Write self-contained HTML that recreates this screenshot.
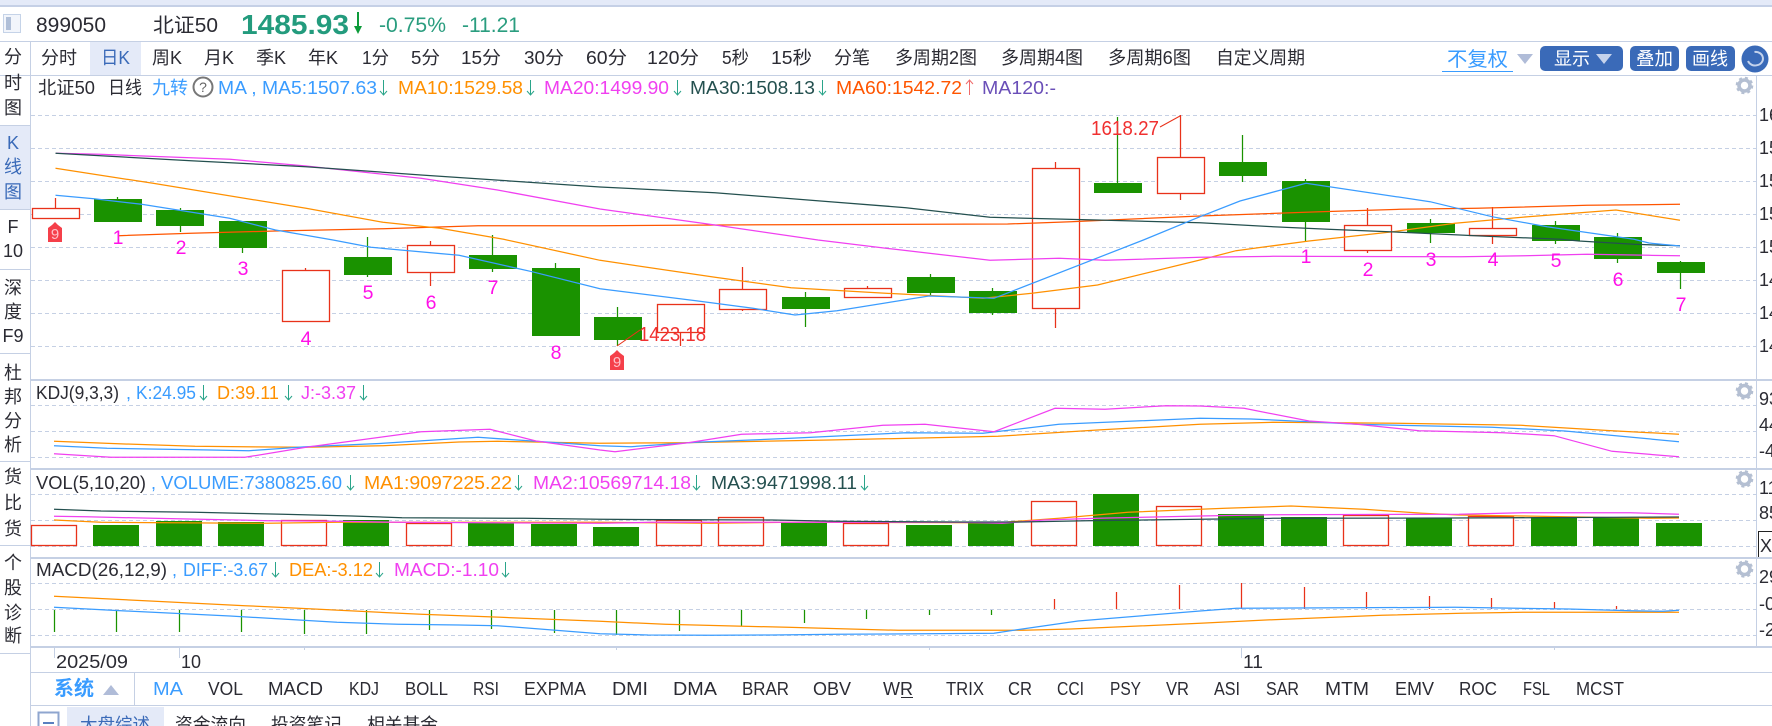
<!DOCTYPE html>
<html><head><meta charset="utf-8"><title>899050</title>
<style>
html,body{margin:0;padding:0;background:#fff;width:1772px;height:726px;overflow:hidden}
svg{display:block}
text{font-family:"Liberation Sans","Noto Sans CJK SC",sans-serif;font-size:18px;fill:#2b2b33}
.b{fill:#3a9cff}.o{fill:#ff9000}.m{fill:#f040f0}.d{fill:#24504f}.r{fill:#ff5500}.p{fill:#6a4fb8}
.n{fill:#ff10e8;font-size:19.5px;text-anchor:middle}
.c{text-anchor:middle}
.l{fill:none;stroke-width:1.25}
.cr{shape-rendering:crispEdges}
</style></head><body>
<svg width="1772" height="726" viewBox="0 0 1772 726" xmlns="http://www.w3.org/2000/svg">
<!-- chrome -->
<rect width="1772" height="5" fill="#e4eaf8"/><rect y="5" width="1772" height="2" fill="#c5d0e6"/>
<rect x="90" y="42" width="51" height="33" fill="#e4eaf8"/>
<rect x="0" y="125" width="30" height="84" fill="#e4eaf8"/>
<rect x="67" y="707" width="97" height="19" fill="#e4eaf8"/>
<g fill="#c5d0e4" class="cr">
<rect y="41" width="1772" height="1"/><rect y="75" width="1772" height="1"/>
<rect x="30" y="41" width="1" height="685"/>
<rect y="125" width="30" height="1"/><rect y="209" width="30" height="1"/><rect y="269" width="30" height="1"/><rect y="353" width="30" height="1"/><rect y="461" width="30" height="1"/><rect y="545" width="30" height="1"/><rect y="653" width="30" height="1"/>
<rect x="30" y="379" width="1742" height="2"/><rect x="30" y="468" width="1742" height="2"/><rect x="30" y="557" width="1742" height="2"/><rect x="30" y="646" width="1742" height="2"/>
<rect x="30" y="672" width="1742" height="1"/><rect x="30" y="705" width="1742" height="1"/>
<rect x="1756" y="75" width="1" height="572"/>
<rect x="134" y="673" width="1" height="32"/>
</g>
<!-- grid -->
<path class="cr" stroke="#c5d0e4" stroke-dasharray="4 3" fill="none" d="M31 115.5H1756M31 148.5H1756M31 181.5H1756M31 214.5H1756M31 247.5H1756M31 280.5H1756M31 313.5H1756M31 346.5H1756M31 405.5H1756M31 431.5H1756M31 457.5H1756M31 494.5H1756M31 520.5H1756M31 546.5H1756M31 583.5H1756M31 609.5H1756M31 635.5H1756"/>
<!-- header -->
<rect x="3.5" y="14.5" width="17" height="18" fill="#f2f5fb" stroke="#c5d3e8"/><rect x="6" y="17" width="5" height="13" fill="#b0bfd8"/>
<text x="36" y="32" textLength="70" lengthAdjust="spacingAndGlyphs" style="font-size:21px">899050</text>
<text x="153" y="32" textLength="65" lengthAdjust="spacingAndGlyphs" style="font-size:20px">北证50</text>
<text x="241" y="34" textLength="108" lengthAdjust="spacingAndGlyphs" style="font-size:28px;font-weight:bold;fill:#239b7d">1485.93</text>
<path d="M357 12h2v14h3l-4 8-4-8h3z" fill="#0d9b3a"/>
<text x="379" y="32" textLength="67" lengthAdjust="spacingAndGlyphs" style="font-size:21px;fill:#2a9d7f">-0.75%</text>
<text x="462" y="32" textLength="58" lengthAdjust="spacingAndGlyphs" style="font-size:21px;fill:#2a9d7f">-11.21</text>
<!-- toolbar -->
<g>
<text x="41" y="64" textLength="36" lengthAdjust="spacingAndGlyphs">分时</text>
<text x="101" y="64" textLength="29" lengthAdjust="spacingAndGlyphs" style="fill:#3a6ab8">日K</text>
<text x="152" y="64" textLength="30" lengthAdjust="spacingAndGlyphs">周K</text>
<text x="204" y="64" textLength="30" lengthAdjust="spacingAndGlyphs">月K</text>
<text x="256" y="64" textLength="30" lengthAdjust="spacingAndGlyphs">季K</text>
<text x="308" y="64" textLength="30" lengthAdjust="spacingAndGlyphs">年K</text>
<text x="362" y="64" textLength="27" lengthAdjust="spacingAndGlyphs">1分</text>
<text x="411" y="64" textLength="29" lengthAdjust="spacingAndGlyphs">5分</text>
<text x="461" y="64" textLength="40" lengthAdjust="spacingAndGlyphs">15分</text>
<text x="524" y="64" textLength="40" lengthAdjust="spacingAndGlyphs">30分</text>
<text x="586" y="64" textLength="41" lengthAdjust="spacingAndGlyphs">60分</text>
<text x="647" y="64" textLength="52" lengthAdjust="spacingAndGlyphs">120分</text>
<text x="722" y="64" textLength="27" lengthAdjust="spacingAndGlyphs">5秒</text>
<text x="771" y="64" textLength="41" lengthAdjust="spacingAndGlyphs">15秒</text>
<text x="834" y="64" textLength="36" lengthAdjust="spacingAndGlyphs">分笔</text>
<text x="895" y="64" textLength="82" lengthAdjust="spacingAndGlyphs">多周期2图</text>
<text x="1001" y="64" textLength="82" lengthAdjust="spacingAndGlyphs">多周期4图</text>
<text x="1108" y="64" textLength="83" lengthAdjust="spacingAndGlyphs">多周期6图</text>
<text x="1216" y="64" textLength="89" lengthAdjust="spacingAndGlyphs">自定义周期</text>
<text x="1447" y="66" textLength="61" lengthAdjust="spacingAndGlyphs" style="font-size:20px;fill:#3a9cff">不复权</text>
<rect x="1442" y="71" width="71" height="1" fill="#3a9cff"/>
<path d="M1517 54h16l-8 10z" fill="#b0bcd8"/>
<rect x="1540" y="46" width="83" height="25" rx="5" fill="#3a6ab8"/>
<text x="1554" y="65" textLength="36" lengthAdjust="spacingAndGlyphs" style="fill:#fff">显示</text>
<path d="M1596 54h16l-8 10z" fill="#c5d3ec"/>
<rect x="1630" y="46" width="49" height="25" rx="5" fill="#3a6ab8"/>
<text x="1636" y="65" textLength="37" lengthAdjust="spacingAndGlyphs" style="fill:#fff">叠加</text>
<rect x="1686" y="46" width="49" height="25" rx="5" fill="#3a6ab8"/>
<text x="1692" y="65" textLength="36" lengthAdjust="spacingAndGlyphs" style="fill:#fff">画线</text>
<circle cx="1755" cy="59" r="13.5" fill="#3a6ab8"/>
<path d="M1754.5 52A7 6.5 0 0 1 1757 65.2A7.5 7.5 0 0 1 1748 61" fill="none" stroke="#c5d3ec" stroke-width="2"/>
</g>
<!-- sidebar -->
<g class="sb">
<text class="c" x="13" y="63">分</text><text class="c" x="13" y="89">时</text><text class="c" x="13" y="114">图</text>
<text class="c" x="13" y="149" style="fill:#3a6ab8">K</text><text class="c" x="13" y="173" style="fill:#3a6ab8">线</text><text class="c" x="13" y="198" style="fill:#3a6ab8">图</text>
<text class="c" x="13" y="233">F</text><text class="c" x="13" y="257">10</text>
<text class="c" x="13" y="294">深</text><text class="c" x="13" y="318">度</text><text class="c" x="13" y="342">F9</text>
<text class="c" x="13" y="379">杜</text><text class="c" x="13" y="403">邦</text><text class="c" x="13" y="427">分</text><text class="c" x="13" y="451">析</text>
<text class="c" x="13" y="483">货</text><text class="c" x="13" y="509">比</text><text class="c" x="13" y="535">货</text>
<text class="c" x="13" y="569">个</text><text class="c" x="13" y="594">股</text><text class="c" x="13" y="619">诊</text><text class="c" x="13" y="642">断</text>
</g>
<!-- candles -->
<g fill="#1a9200" class="cr">
<rect x="94" y="199" width="48" height="23"/><rect x="156" y="210" width="48" height="16"/><rect x="219" y="221" width="48" height="27"/><rect x="344" y="257" width="48" height="18"/><rect x="469" y="255" width="48" height="14"/><rect x="532" y="268" width="48" height="68"/><rect x="594" y="317" width="48" height="23"/><rect x="782" y="297" width="48" height="12"/><rect x="907" y="277" width="48" height="16"/><rect x="969" y="291" width="48" height="22"/><rect x="1094" y="183" width="48" height="10"/><rect x="1219" y="162" width="48" height="14"/><rect x="1282" y="181" width="48" height="41"/><rect x="1407" y="223" width="48" height="10"/><rect x="1532" y="225" width="48" height="16"/><rect x="1594" y="237" width="48" height="22"/><rect x="1657" y="262" width="48" height="11"/>
</g>
<path stroke="#1a9200" stroke-width="1.25" fill="none" d="M117.5 197V199M180.5 208V232M242.5 221V253M367.5 237V277M492.5 235V272M555.5 263V268M617.5 307V346M805.5 292V327M930.5 274V296M992.5 288V315M1117.5 117V183M1242.5 135V182M1305.5 179V241M1430.5 219V243M1555.5 221V244M1617.5 233V263M1680.5 261V289"/>
<path stroke="#e8321a" stroke-width="1.25" fill="none" d="M55.5 198V208M305.5 268V270M430.5 241V245M430.5 272V286M680.5 332V346M742.5 267V289M742.5 309V311M867.5 286V288M1055.5 162V168M1055.5 308V328M1180.5 115V157M1180.5 193V200M1367.5 208V225M1367.5 250V253M1492.5 207V228M1492.5 235V244"/>
<g fill="#fff" stroke="#e8321a" stroke-width="1.3">
<rect x="32.5" y="208.5" width="47" height="10"/><rect x="282.5" y="270.5" width="47" height="51"/><rect x="407.5" y="245.5" width="47" height="27"/><rect x="657.5" y="304.5" width="47" height="28"/><rect x="719.5" y="289.5" width="47" height="20"/><rect x="844.5" y="288.5" width="47" height="9"/><rect x="1032.5" y="168.5" width="47" height="140"/><rect x="1157.5" y="157.5" width="47" height="36"/><rect x="1344.5" y="225.5" width="47" height="25"/><rect x="1469.5" y="228.5" width="47" height="7"/>
</g>
<!-- MA lines -->
<polyline class="l" stroke="#ff5500" points="118.6,235.7 191,233.3 275.5,231 383,228.7 478,225.7 600,225.7 772,224.7 1007.6,224 1071,221.7 1200,216 1320,211.7 1400,209.3 1477,208.3 1587,205.3 1680,204.3"/>
<polyline class="l" stroke="#ff9000" points="55.5,168.3 153,183.3 306,208.3 383,222.3 440,228.3 503.6,239.3 600,260.3 715,277.3 791,287.7 868,292.3 983,298.3 1032,293.3 1097.5,285 1200,260 1236,250.7 1309,241 1393,231.7 1455,223.3 1528,216.7 1616,210 1680,220.3"/>
<polyline class="l" stroke="#f040f0" points="56,153.3 99.5,154.3 230,159.3 306,166 421,178.3 497.5,190 600,209 715,225 818,240 895,249.3 990,260.3 1059,258.3 1105,260.3 1200,257.3 1273,256.3 1461,256.7 1525,255.7 1587,254.3 1649,255.3 1680,255.7"/>
<polyline class="l" stroke="#24504f" points="55.5,153.3 191,160.7 306,166.7 421,175 600,187 715,192.7 830,201.7 906,207.7 990,217.3 1097,220 1200,222.7 1273,226.7 1328,229.3 1411.6,232.7 1481,236 1561,239.3 1579,241 1634,244.3 1680,245.7"/>
<polyline class="l" stroke="#3a9cff" points="55.5,195.3 94,198.7 141.6,204.3 229.6,218.3 275.5,230 333,240 371,247.3 459,255.3 532,271.7 600,288.7 696,300.7 753,308.3 795,315 837,310.7 929,296 994,298.3 1143.4,240 1200,216.7 1240,201 1306,183.3 1430,201.7 1492,216.7 1547,226.7 1634,239.3 1649,243 1680,246"/>
<!-- annotations -->
<path d="M617 346L640 330M1160 127L1180 116" stroke="#e8321a" fill="none"/>
<text x="639" y="341" textLength="67" lengthAdjust="spacingAndGlyphs" style="fill:#f03030;font-size:20px">1423.18</text>
<text x="1091" y="135" textLength="68" lengthAdjust="spacingAndGlyphs" style="fill:#f03030;font-size:20px">1618.27</text>
<path d="M48 228L52 225L55 222L58 225L62 228V242H48Z" fill="#f5404a"/><text class="c" x="55" y="239" style="font-size:15px;fill:#ffc0c8">9</text>
<path d="M610 356L614 353L617 350L620 353L624 356V370H610Z" fill="#f5404a"/><text class="c" x="617" y="367" style="font-size:15px;fill:#ffc0c8">9</text>
<text class="n" x="118" y="244">1</text><text class="n" x="181" y="254">2</text><text class="n" x="243" y="275">3</text><text class="n" x="306" y="345">4</text><text class="n" x="368" y="299">5</text><text class="n" x="431" y="309">6</text><text class="n" x="493" y="294">7</text><text class="n" x="556" y="359">8</text><text class="n" x="1306" y="263">1</text><text class="n" x="1368" y="276">2</text><text class="n" x="1431" y="266">3</text><text class="n" x="1493" y="266">4</text><text class="n" x="1556" y="267">5</text><text class="n" x="1618" y="286">6</text><text class="n" x="1681" y="311">7</text>
<!-- chart title -->
<text x="38" y="94" textLength="57" lengthAdjust="spacingAndGlyphs">北证50</text>
<text x="108" y="94" textLength="34" lengthAdjust="spacingAndGlyphs">日线</text>
<text class="b" x="152" y="94" textLength="36" lengthAdjust="spacingAndGlyphs">九转</text>
<circle cx="203" cy="87" r="9.5" fill="#fff" stroke="#777" stroke-width="2"/><text class="c" x="203" y="92" style="font-size:14px;fill:#666">?</text>
<text class="b" x="218" y="94" textLength="159" lengthAdjust="spacingAndGlyphs">MA , MA5:1507.63</text>
<text class="o" x="398" y="94" textLength="125" lengthAdjust="spacingAndGlyphs">MA10:1529.58</text>
<text class="m" x="544" y="94" textLength="125" lengthAdjust="spacingAndGlyphs">MA20:1499.90</text>
<text class="d" x="690" y="94" textLength="125" lengthAdjust="spacingAndGlyphs">MA30:1508.13</text>
<text class="r" x="836" y="94" textLength="126" lengthAdjust="spacingAndGlyphs">MA60:1542.72</text>
<text class="p" x="982" y="94" textLength="74" lengthAdjust="spacingAndGlyphs">MA120:-</text>
<path stroke="#2aa58a" fill="none" d="M383.5 80V95M380 91L383.5 95L387 91M530.5 80V95M527 91L530.5 95L534 91M677.5 80V95M674 91L677.5 95L681 91M822.5 80V95M819 91L822.5 95L826 91"/>
<path stroke="#f06a6a" fill="none" d="M969.5 80V95M966 84L969.5 80L973 84"/>
<!-- KDJ -->
<text x="36" y="399" textLength="83" lengthAdjust="spacingAndGlyphs">KDJ(9,3,3)</text>
<text class="b" x="126" y="399">,</text><text class="b" x="136" y="399" textLength="60" lengthAdjust="spacingAndGlyphs">K:24.95</text>
<text class="o" x="217" y="399" textLength="62" lengthAdjust="spacingAndGlyphs">D:39.11</text>
<text class="m" x="301" y="399" textLength="55" lengthAdjust="spacingAndGlyphs">J:-3.37</text>
<path stroke="#2aa58a" fill="none" d="M203.5 385V400M200 396L203.5 400L207 396M288.5 385V400M285 396L288.5 400L292 396M363.5 385V400M360 396L363.5 400L367 396"/>
<polyline class="l" stroke="#ff9000" points="54,441.3 134,444.3 195,446.3 306,447.3 383,445.7 459,442 497.5,441.3 600,443.3 684,442.7 830,440 998,436.3 1097.5,430 1200,424.3 1273,422.3 1397,423.3 1521,425.3 1612,430.7 1679,434.3"/>
<polyline class="l" stroke="#3a9cff" points="54,445.7 107,448.3 210.5,450 249,450.7 306,446.7 383,443.3 478,437.3 536,441.3 600,445.7 631,446.7 696,442.3 791,438.3 906,432.7 983,433.3 1059,424.3 1200,418.3 1251,419 1309,421.7 1357,424.3 1492,427.3 1565,431 1679,441.7"/>
<polyline class="l" stroke="#f040f0" points="54,453.7 111,457.3 245,457.3 306,447.3 421,431.7 490,429.3 536,441 600,450 615,451.7 688,442.7 741.6,434.3 810.5,432.7 883,425.3 925,424.3 994,431.7 1055,408.3 1105,409.3 1166,405.7 1200,406 1244,408.3 1309,421 1357,424.3 1419,430.7 1503,432.7 1554,435.7 1612,451.3 1679,456.7"/>
<!-- VOL -->
<text x="36" y="489" textLength="110" lengthAdjust="spacingAndGlyphs">VOL(5,10,20)</text>
<text class="b" x="151" y="489">,</text><text class="b" x="161" y="489" textLength="181" lengthAdjust="spacingAndGlyphs">VOLUME:7380825.60</text>
<text class="o" x="364" y="489" textLength="148" lengthAdjust="spacingAndGlyphs">MA1:9097225.22</text>
<text class="m" x="533" y="489" textLength="158" lengthAdjust="spacingAndGlyphs">MA2:10569714.18</text>
<text class="d" x="711" y="489" textLength="146" lengthAdjust="spacingAndGlyphs">MA3:9471998.11</text>
<path stroke="#2aa58a" fill="none" d="M350.5 475V490M347 486L350.5 490L354 486M518.5 475V490M515 486L518.5 490L522 486M696.5 475V490M693 486L696.5 490L700 486M864.5 475V490M861 486L864.5 490L868 486"/>
<g fill="#1a9200" class="cr">
<rect x="93" y="525" width="46" height="21"/><rect x="156" y="521" width="46" height="25"/><rect x="218" y="522" width="46" height="24"/><rect x="343" y="520" width="46" height="26"/><rect x="468" y="523" width="46" height="23"/><rect x="531" y="524" width="46" height="22"/><rect x="593" y="527" width="46" height="19"/><rect x="781" y="523" width="46" height="23"/><rect x="906" y="525" width="46" height="21"/><rect x="968" y="523" width="46" height="23"/><rect x="1093" y="494" width="46" height="52"/><rect x="1218" y="514" width="46" height="32"/><rect x="1281" y="517" width="46" height="29"/><rect x="1406" y="518" width="46" height="28"/><rect x="1531" y="517" width="46" height="29"/><rect x="1593" y="517" width="46" height="29"/><rect x="1656" y="523" width="46" height="23"/>
</g>
<g fill="#fff" stroke="#e8321a" stroke-width="1.3">
<rect x="31.5" y="525.5" width="45" height="20"/><rect x="281.5" y="520.5" width="45" height="25"/><rect x="406.5" y="523.5" width="45" height="22"/><rect x="656.5" y="520.5" width="45" height="25"/><rect x="718.5" y="517.5" width="45" height="28"/><rect x="843.5" y="523.5" width="45" height="22"/><rect x="1031.5" y="501.5" width="45" height="44"/><rect x="1156.5" y="506.5" width="45" height="39"/><rect x="1343.5" y="515.5" width="45" height="30"/><rect x="1468.5" y="516.5" width="45" height="29"/>
</g>
<polyline class="l" stroke="#ff9000" points="54,520 101,522.3 268,523.3 337,522.3 600,522.3 709,523.3 791,522.3 998,522.7 1025,520.7 1059,518.3 1128,512.3 1200,509.3 1225.5,508.3 1291,506 1364,509.3 1422.5,513.3 1459,515 1523,516 1649,518.3 1679,518"/>
<polyline class="l" stroke="#f040f0" points="54,516.3 86,516.7 153,518.3 268,520.7 337,521.3 398,522.3 600,523.3 650,522.3 960,522.3 1002,523.3 1044,520 1097.5,518.3 1200,516 1273,514.7 1459,514.3 1523,512.7 1630.5,512.7 1679,514.3"/>
<polyline class="l" stroke="#24504f" points="54,509.3 101,511 195,512.3 283,514.3 352,516 402,517.7 524,518.3 600,519.3 772,520 837,521.3 960,522 1021,522 1086,520.7 1200,519.3 1273,518.3 1455,518 1679,517"/>
<!-- MACD -->
<text x="36" y="576" textLength="131" lengthAdjust="spacingAndGlyphs">MACD(26,12,9)</text>
<text class="b" x="172" y="576">,</text><text class="b" x="183" y="576" textLength="85" lengthAdjust="spacingAndGlyphs">DIFF:-3.67</text>
<text class="o" x="289" y="576" textLength="84" lengthAdjust="spacingAndGlyphs">DEA:-3.12</text>
<text class="m" x="394" y="576" textLength="105" lengthAdjust="spacingAndGlyphs">MACD:-1.10</text>
<path stroke="#2aa58a" fill="none" d="M275.5 562V577M272 573L275.5 577L279 573M379.5 562V577M376 573L379.5 577L383 573M505.5 562V577M502 573L505.5 577L509 573"/>
<path stroke="#1a9200" stroke-width="1.25" fill="none" d="M54.5 610V632M116.5 610V632M179.5 610V632M241.5 610V632M304.5 610V634M366.5 610V634M429.5 610V630M491.5 610V629M554.5 610V633M616.5 610V635M679.5 610V631M741.5 610V626M804.5 610V623M866.5 610V619M929.5 610V615M991.5 610V615"/>
<path stroke="#e8321a" stroke-width="1.25" fill="none" d="M1054.5 599V609M1116.5 592V609M1179.5 585V609M1241.5 583V609M1304.5 587V609M1366.5 592V609M1429.5 596V609M1491.5 598V609M1554.5 602V609M1616.5 606V609"/>
<polyline class="l" stroke="#ff9000" points="54,596.3 145,600.7 245,605.7 314,609 421,614.3 501,617.3 600,621.3 665,624.3 787.5,627.3 898.5,630.3 1023,630.3 1071,629 1200,623.3 1273,619.7 1382,615.3 1461,613.3 1523,612.3 1679,612.3"/>
<polyline class="l" stroke="#3a9cff" points="54,607.3 126,611 230,616 337,622.3 398,624.3 459,625 497.5,625.7 600,633.7 648,635 711,635.3 772,635 837,634.3 994,633.3 1017,629.7 1078,621 1200,611 1236.5,608.3 1455,607.3 1568.5,609 1630.5,610.7 1663,611.3 1679,610.3"/>
<!-- gears -->
<g fill="none" stroke="#b4bfd2">
<g><circle cx="1744.5" cy="85.5" r="5.5" stroke-width="3.6"/><circle cx="1744.5" cy="85.5" r="7.6" stroke-width="2.4" stroke-dasharray="3 3"/></g>
<g><circle cx="1744.5" cy="391" r="5.5" stroke-width="3.6"/><circle cx="1744.5" cy="391" r="7.6" stroke-width="2.4" stroke-dasharray="3 3"/></g>
<g><circle cx="1744.5" cy="479" r="5.5" stroke-width="3.6"/><circle cx="1744.5" cy="479" r="7.6" stroke-width="2.4" stroke-dasharray="3 3"/></g>
<g><circle cx="1744.5" cy="569" r="5.5" stroke-width="3.6"/><circle cx="1744.5" cy="569" r="7.6" stroke-width="2.4" stroke-dasharray="3 3"/></g>
</g>
<!-- right axis -->
<g>
<text x="1759" y="121">1600</text><text x="1759" y="154">1570</text><text x="1759" y="187">1540</text><text x="1759" y="220">1510</text><text x="1759" y="253">1500</text><text x="1759" y="286">1470</text><text x="1759" y="319">1440</text><text x="1759" y="352">1410</text>
<text x="1759" y="405">93</text><text x="1759" y="431">44</text><text x="1759" y="457">-4</text>
<text x="1759" y="494">11</text><text x="1759" y="519">85</text>
<text x="1759" y="583">29</text><text x="1759" y="610">-0</text><text x="1759" y="636">-2</text>
<path d="M1772 531.5H1758.5V557" fill="none" stroke="#222" class="cr"/>
<text x="1760" y="552">X</text>
</g>
<!-- date axis -->
<path class="cr" stroke="#c5d0e4" fill="none" d="M54.5 648V658M179.5 648V658M1241.5 648V658M304.5 648V650M616.5 648V650M929.5 648V650M1554.5 648V650"/>
<text x="56" y="668" textLength="72" lengthAdjust="spacingAndGlyphs">2025/09</text><text x="181" y="668" textLength="20" lengthAdjust="spacingAndGlyphs">10</text><text x="1243" y="668" textLength="20" lengthAdjust="spacingAndGlyphs">11</text>
<!-- indicator bar -->
<text x="54" y="695" textLength="40" lengthAdjust="spacingAndGlyphs" style="font-weight:bold;fill:#3a9cff;font-size:20px">系统</text>
<path d="M103 695L111 685L119 695Z" fill="#b0bcd8"/>
<g>
<text class="b" x="153" y="695" textLength="30" lengthAdjust="spacingAndGlyphs">MA</text>
<text x="208" y="695" textLength="35" lengthAdjust="spacingAndGlyphs">VOL</text>
<text x="268" y="695" textLength="55" lengthAdjust="spacingAndGlyphs">MACD</text>
<text x="349" y="695" textLength="30" lengthAdjust="spacingAndGlyphs">KDJ</text>
<text x="405" y="695" textLength="43" lengthAdjust="spacingAndGlyphs">BOLL</text>
<text x="473" y="695" textLength="26" lengthAdjust="spacingAndGlyphs">RSI</text>
<text x="524" y="695" textLength="62" lengthAdjust="spacingAndGlyphs">EXPMA</text>
<text x="612" y="695" textLength="36" lengthAdjust="spacingAndGlyphs">DMI</text>
<text x="673" y="695" textLength="44" lengthAdjust="spacingAndGlyphs">DMA</text>
<text x="742" y="695" textLength="47" lengthAdjust="spacingAndGlyphs">BRAR</text>
<text x="813" y="695" textLength="38" lengthAdjust="spacingAndGlyphs">OBV</text>
<text x="883" y="695" textLength="30" lengthAdjust="spacingAndGlyphs">WR</text>
<rect x="901" y="697" width="12" height="1" fill="#2b2b33"/>
<text x="946" y="695" textLength="38" lengthAdjust="spacingAndGlyphs">TRIX</text>
<text x="1008" y="695" textLength="24" lengthAdjust="spacingAndGlyphs">CR</text>
<text x="1057" y="695" textLength="27" lengthAdjust="spacingAndGlyphs">CCI</text>
<text x="1110" y="695" textLength="31" lengthAdjust="spacingAndGlyphs">PSY</text>
<text x="1166" y="695" textLength="23" lengthAdjust="spacingAndGlyphs">VR</text>
<text x="1214" y="695" textLength="26" lengthAdjust="spacingAndGlyphs">ASI</text>
<text x="1266" y="695" textLength="33" lengthAdjust="spacingAndGlyphs">SAR</text>
<text x="1325" y="695" textLength="44" lengthAdjust="spacingAndGlyphs">MTM</text>
<text x="1395" y="695" textLength="39" lengthAdjust="spacingAndGlyphs">EMV</text>
<text x="1459" y="695" textLength="38" lengthAdjust="spacingAndGlyphs">ROC</text>
<text x="1523" y="695" textLength="27" lengthAdjust="spacingAndGlyphs">FSL</text>
<text x="1576" y="695" textLength="48" lengthAdjust="spacingAndGlyphs">MCST</text>
</g>
<!-- bottom tabs -->
<rect x="38.5" y="712.5" width="20" height="20" fill="#fff" stroke="#8fa6cf" stroke-width="2"/><rect x="43" y="722" width="11" height="2" fill="#5a80c0"/>
<text x="80" y="731" textLength="70" lengthAdjust="spacingAndGlyphs" style="fill:#3a6ab8">大盘综述</text>
<text x="175" y="731" textLength="71" lengthAdjust="spacingAndGlyphs">资金流向</text>
<text x="271" y="731" textLength="71" lengthAdjust="spacingAndGlyphs">投资笔记</text>
<text x="367" y="731" textLength="71" lengthAdjust="spacingAndGlyphs">相关基金</text>
</svg>
</body></html>
